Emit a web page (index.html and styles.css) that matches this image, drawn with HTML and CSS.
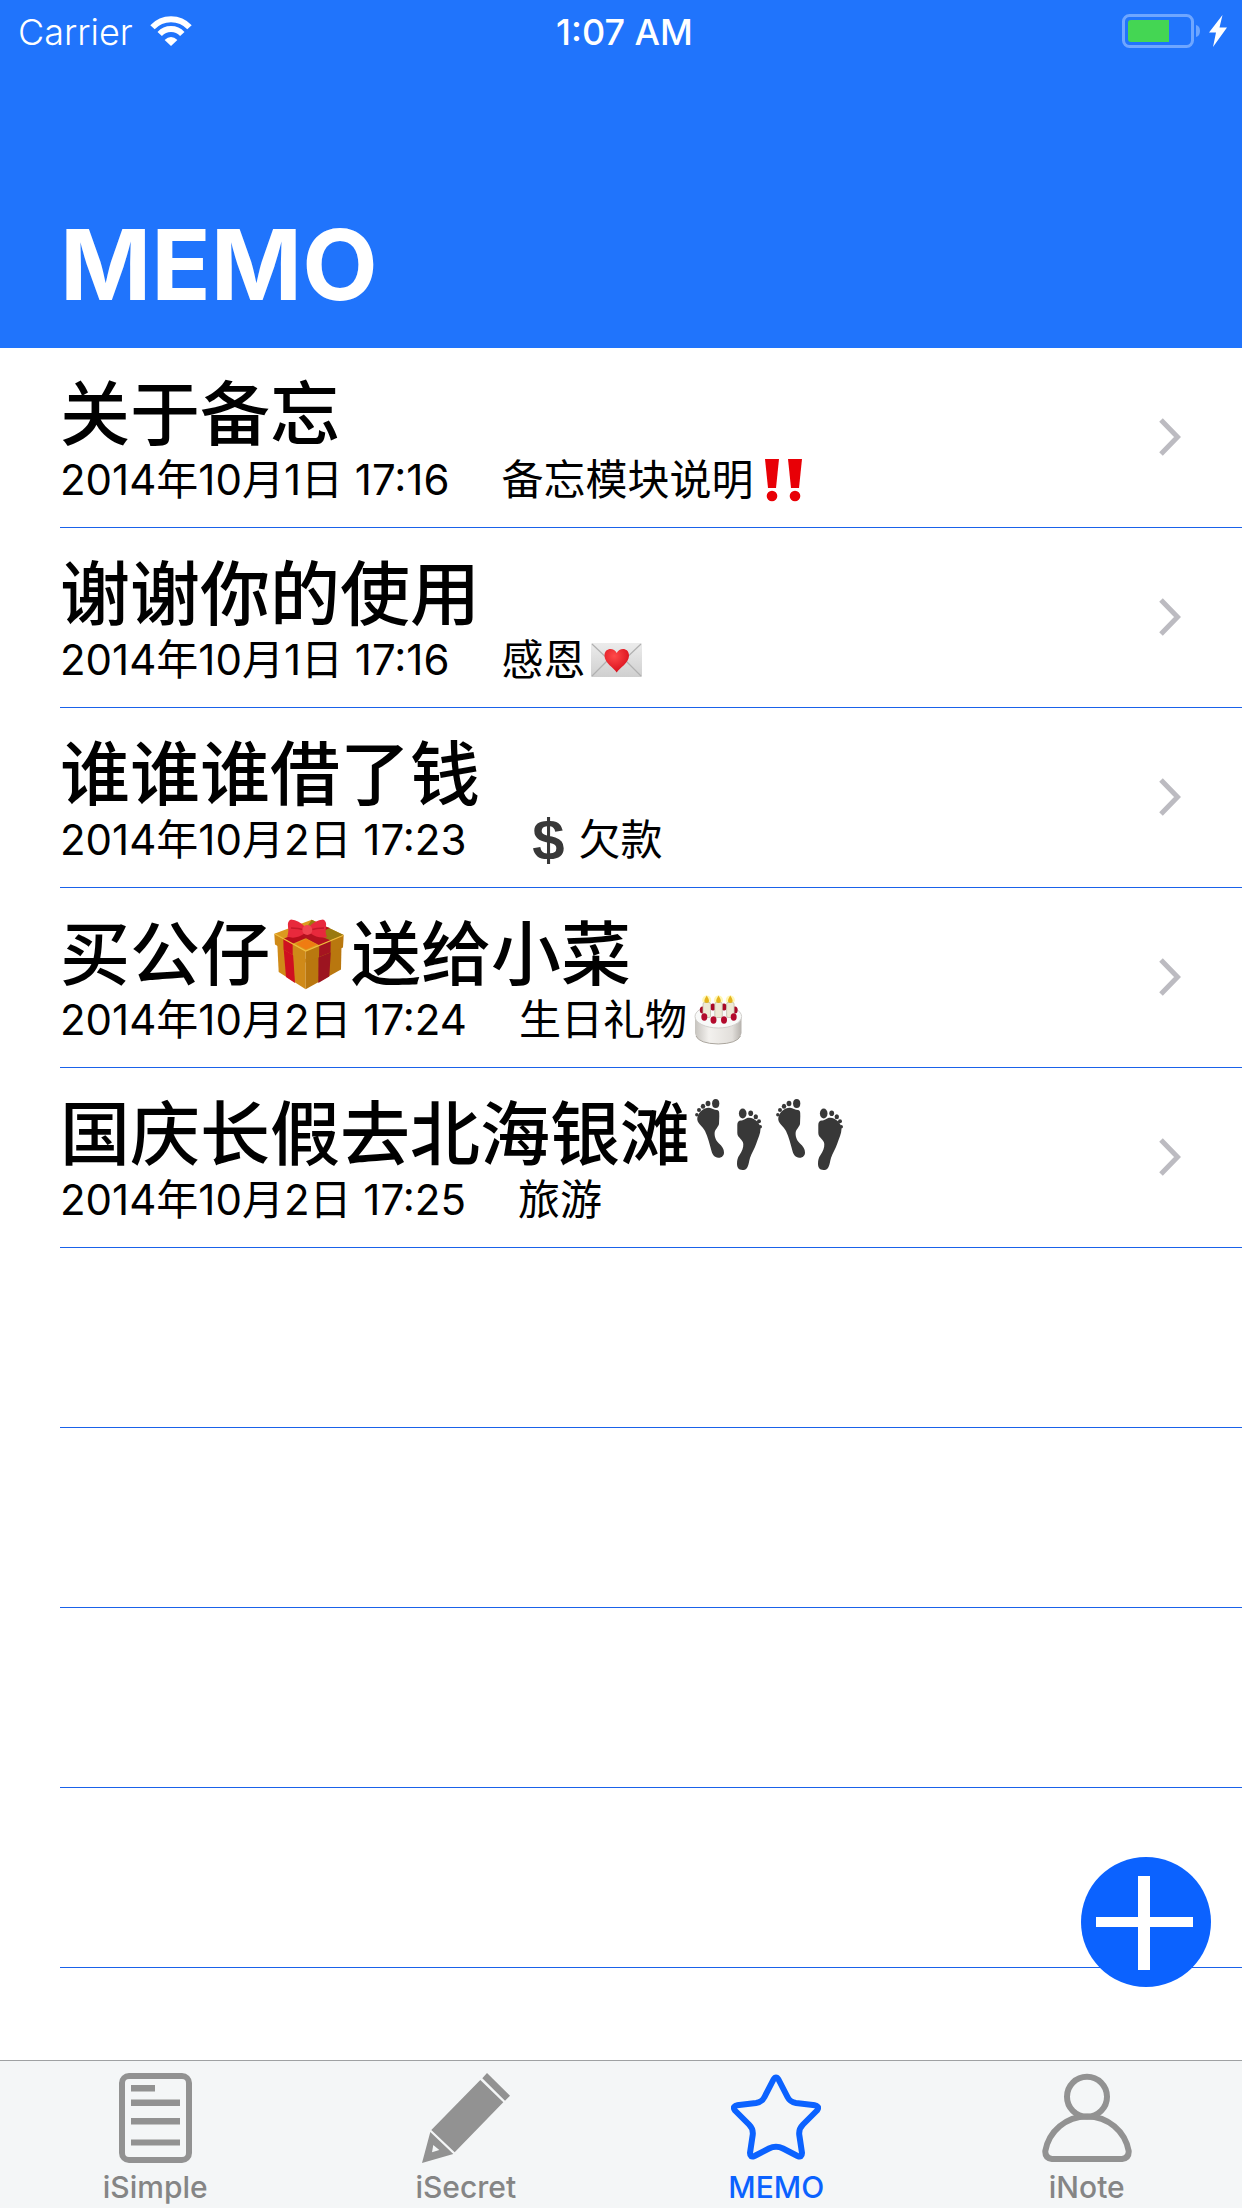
FILE: index.html
```html
<!DOCTYPE html>
<html lang="zh-CN">
<head>
<meta charset="utf-8">
<meta name="viewport" content="width=device-width, initial-scale=1">
<title>MEMO</title>
<link rel="stylesheet" href="styles.css">
</head>
<body>
<svg class="defs" aria-hidden="true">
  <symbol id="chevron" viewBox="0 0 24 40">
    <path d="M3 3 19.500 20 3 37" fill="none" stroke="#bcbbc1" stroke-width="5"/>
  </symbol>
  <symbol id="feet" viewBox="0 0 67 71">
    <g fill="#383838">
      <ellipse cx="20.700" cy="4.500" rx="3.600" ry="4.500"/>
      <ellipse cx="13" cy="4.500" rx="2.400" ry="2.700"/>
      <ellipse cx="8" cy="7.200" rx="2.200" ry="2.500"/>
      <circle cx="4" cy="11" r="2"/>
      <circle cx="1.800" cy="15.800" r="1.700"/>
      <path d="M2.300 19C3 13 9 8.500 14 8.700C17 8.800 19 11 22 11C24.500 11.500 24.300 14 24.300 17L24 25C23.500 28 20 30 19.600 34C19.500 39 21.500 42 24 44.500C27 47 29 50 29 53.500C29 57 26.500 59 23.300 58.700C19.500 58.500 17.500 55.500 16.700 52.700C14.500 45 13 38 10 32C7.500 27 1.500 24 2.300 19Z"/>
      <ellipse cx="47.700" cy="14.500" rx="3.800" ry="5"/>
      <ellipse cx="55.700" cy="14.300" rx="2.400" ry="2.800"/>
      <ellipse cx="60.800" cy="17.700" rx="2.200" ry="2.500"/>
      <circle cx="64" cy="22.300" r="2"/>
      <circle cx="65.300" cy="27.700" r="1.700"/>
      <path d="M42.300 26C42.300 23 43.500 21.500 46 21.500C49 21.500 50.500 18.700 54 18.700C60 19 65.500 24 65.500 30C65.500 35 63 39 61.500 44C59.500 50 56.500 54 55 59C54 62 54 65 52.500 68C51.500 70.500 49.500 71 47.500 71C43.500 71 42 68 42 65C42 61 42.500 59 44.500 56C47 52 48.500 49 48.300 45C48 40 42.300 39 42.300 34Z"/>
    </g>
  </symbol>
</svg>

<div class="app">
  <header class="top">
    <div class="status">
      <div class="status-left">
        <span class="carrier">Carrier</span>
        <svg class="wifi" viewBox="0 0 42 30" role="img" aria-label="Wi-Fi">
          <path d="M2.500 11.300A25.300 25.300 0 0 1 39.500 11.300" fill="none" stroke="#fff" stroke-width="6"/>
          <path d="M9.700 18A15.500 15.500 0 0 1 32.300 18" fill="none" stroke="#fff" stroke-width="6"/>
          <path d="M14.600 24Q21 18 27.400 24L21 30Z" fill="#fff"/>
        </svg>
      </div>
      <span class="clock">1:07 AM</span>
      <div class="status-right">
        <svg class="battery" viewBox="0 0 79 34" role="img" aria-label="Battery charging">
          <rect x="1.500" y="1.500" width="69" height="31" rx="6" fill="none" stroke="#6ea6ff" stroke-width="3"/>
          <path d="M74 11Q78 12 78 17T74 23Z" fill="#6ea6ff"/>
          <path d="M9 6H47V28H9Q6 28 6 25V9Q6 6 9 6Z" fill="#44d653"/>
        </svg>
        <svg class="bolt" viewBox="0 0 18 32" aria-hidden="true">
          <path d="M13.500 0 0 17.500H7L4 32 18 12.500H10.500Z" fill="#fff"/>
        </svg>
      </div>
    </div>
    <h1 class="heading">MEMO</h1>
  </header>

  <main class="content">
    <ul class="memos">
      <li class="memo">
        <a class="memo-link" href="#memo-1">
          <span class="memo-text">
            <span class="memo-title">关于备忘</span>
            <span class="memo-meta"><time>2014年10月1日 17:16</time><span class="tag">备忘模块说明<svg class="emoji" viewBox="0 0 60 50" role="img" aria-label="‼️"><g fill="#e80006"><path d="M12 4H26L23 33H15Z"/><circle cx="19" cy="41" r="5.300"/><path d="M35 4H49L46 33H38Z"/><circle cx="42" cy="41" r="5.300"/></g></svg></span></span>
          </span>
          <svg class="chevron" aria-hidden="true"><use href="#chevron"/></svg>
        </a>
      </li>
      <li class="memo">
        <a class="memo-link" href="#memo-2">
          <span class="memo-text">
            <span class="memo-title">谢谢你的使用</span>
            <span class="memo-meta"><time>2014年10月1日 17:16</time><span class="tag">感恩<svg class="emoji" viewBox="0 0 60 50" role="img" aria-label="💌">
              <defs>
                <linearGradient id="paper" x2="0" y2="1"><stop stop-color="#ececec"/><stop offset="1" stop-color="#cfcfcf"/></linearGradient>
                <radialGradient id="heart" cx=".4" cy=".3" r=".7"><stop stop-color="#ff4a4a"/><stop offset="1" stop-color="#d80f1c"/></radialGradient>
              </defs>
              <rect x="6" y="8" width="51" height="34" rx="1" fill="url(#paper)"/>
              <path d="M7 9 27 28Q31.500 32 36 28L56 9M7 41 23 25M56 41 40 25" fill="none" stroke="#b1b1b1" stroke-width="1.200"/>
              <path d="M31.700 37.500C29 33 19.500 28 19.500 20.500C19.500 12.500 29 12 31.700 18C34.500 12 44 12.500 44 20.500C44 28 34.500 33 31.700 37.500Z" fill="url(#heart)"/>
            </svg></span></span>
          </span>
          <svg class="chevron" aria-hidden="true"><use href="#chevron"/></svg>
        </a>
      </li>
      <li class="memo">
        <a class="memo-link" href="#memo-3">
          <span class="memo-text">
            <span class="memo-title">谁谁谁借了钱</span>
            <span class="memo-meta"><time>2014年10月2日 17:23</time><span class="tag"><span class="dollar">$</span>欠款</span></span>
          </span>
          <svg class="chevron" aria-hidden="true"><use href="#chevron"/></svg>
        </a>
      </li>
      <li class="memo">
        <a class="memo-link" href="#memo-4">
          <span class="memo-text">
            <span class="memo-title">买公仔<svg class="emoji-large" viewBox="0 0 81 72" role="img" aria-label="🎁">
              <g transform="translate(4 0)">
                <path d="M3.300 25 31.700 40V70.300L4.700 53Z" fill="#d08a18"/>
                <path d="M67.500 26 31.700 40V70.300L67 50.500Z" fill="#b9770f"/>
                <path d="M9.500 28 19 34 21 64 12 58Z" fill="#cf1020"/>
                <path d="M44.500 35 57 30 55.300 57.500 44.300 64Z" fill="#9c1420"/>
                <path d="M.3 14.700 37.700.7 69.700 16 31.700 32Z" fill="#dc9a20"/>
                <path d="M37.700.7 69.700 16 50 24 30 12Z" fill="#9a7a10"/>
                <path d="M.3 14.700 31.700 32V43.500L1 25.500Z" fill="#cf8a18"/>
                <path d="M69.700 16 31.700 32V43.500L69 28.500Z" fill="#b9780f"/>
                <path d="M9.300 19.700 45 6 56 9 18.700 24.800Z" fill="#b80e1b"/>
                <path d="M9.300 19.700 18.700 24.800V36L9.500 30.500Z" fill="#cf1020"/>
                <path d="M45.300 26.300 20 13 28 9 56.700 21.500Z" fill="#b51220"/>
                <path d="M45.300 26.300 56.700 21.500 56.500 33.500 45 38Z" fill="#a51420"/>
                <path d="M22 25 32 20 43 25.500 32 30.500Z" fill="#ef7c12"/>
                <path d="M1 15 31.700 32 69 16.500" fill="none" stroke="#f0bc3c" stroke-width="1.200"/>
                <path d="M31 8Q25 1 17 .5Q13 2 14 8Q15 14 13 17.500Q22 21 31 14Z" fill="#e8293c"/>
                <path d="M35 8Q41 1 49 .5Q53 2 52 8Q51 14 53 18Q44 20 36 14Z" fill="#e8293c"/>
                <path d="M17 9Q24 9 31 11M50 9Q43 9 36 11" fill="none" stroke="#c51829" stroke-width="1.500"/>
                <circle cx="33.300" cy="11" r="5" fill="#f04450"/>
              </g>
            </svg>送给小菜</span>
            <span class="memo-meta"><time>2014年10月2日 17:24</time><span class="tag">生日礼物<svg class="emoji" viewBox="0 0 60 50" role="img" aria-label="🎂">
              <defs><linearGradient id="icing"><stop stop-color="#c6c3be"/><stop offset=".3" stop-color="#f3f1ee"/><stop offset=".8" stop-color="#e2dfdb"/><stop offset="1" stop-color="#b5b1ac"/></linearGradient></defs>
              <g transform="translate(7 1)">
                <path d="M1 21V37Q2 47 24.300 48Q46 47 47.500 37V21Z" fill="url(#icing)"/>
                <path d="M2 40Q5 47.500 24.300 48Q43 47.500 46.500 40" fill="none" stroke="#aaa59d"/>
                <ellipse cx="24.300" cy="20.500" rx="23.300" ry="11.500" fill="#f8f9f8" stroke="#d1cfcc"/>
                <g fill="#a90827"><ellipse cx="8.500" cy="14" rx="2.700" ry="3.500"/><ellipse cx="19" cy="11" rx="2.700" ry="3.500"/><ellipse cx="30" cy="11" rx="2.700" ry="3.500"/><ellipse cx="41" cy="14" rx="2.700" ry="3.500"/></g>
                <g fill="#fff7b5"><circle cx="12.700" cy="4" r="4.500"/><circle cx="24.500" cy="4" r="4.500"/><circle cx="36.300" cy="4" r="4.500"/></g>
                <g fill="#eee9d5" stroke="#bdb7a5" stroke-width=".7"><rect x="9" y="6.500" width="7.500" height="15" rx="1.500"/><rect x="20.800" y="6.500" width="7.500" height="15" rx="1.500"/><rect x="32.600" y="6.500" width="7.500" height="15" rx="1.500"/></g>
                <g fill="#e5b41d"><path d="M12.700-.5Q17.500 7 12.700 7T12.700-.5Z"/><path d="M24.500-.5Q29.300 7 24.500 7T24.500-.5Z"/><path d="M36.300-.5Q41.100 7 36.300 7T36.300-.5Z"/></g>
                <g fill="#b30a2c"><ellipse cx="10.300" cy="21" rx="3" ry="3.700"/><ellipse cx="19.500" cy="24" rx="3" ry="3.700"/><ellipse cx="30" cy="24" rx="3" ry="3.700"/><ellipse cx="39.700" cy="21" rx="3" ry="3.700"/></g>
              </g>
            </svg></span></span>
          </span>
          <svg class="chevron" aria-hidden="true"><use href="#chevron"/></svg>
        </a>
      </li>
      <li class="memo">
        <a class="memo-link" href="#memo-5">
          <span class="memo-text">
            <span class="memo-title">国庆长假去北海银滩<svg class="emoji-large" viewBox="0 0 81 72" role="img" aria-label="👣"><use href="#feet" x="5" y="0" width="67" height="71"/></svg><svg class="emoji-large" viewBox="0 0 81 72" role="img" aria-label="👣"><use href="#feet" x="5" y="0" width="67" height="71"/></svg></span>
            <span class="memo-meta"><time>2014年10月2日 17:25</time><span class="tag">旅游</span></span>
          </span>
          <svg class="chevron" aria-hidden="true"><use href="#chevron"/></svg>
        </a>
      </li>
      <li class="memo" aria-hidden="true"></li>
      <li class="memo" aria-hidden="true"></li>
      <li class="memo" aria-hidden="true"></li>
      <li class="memo" aria-hidden="true"></li>
    </ul>
  </main>

  <button class="add" type="button" aria-label="新建备忘">
    <svg viewBox="0 0 130 130" aria-hidden="true"><path d="M15 60H112V70H15ZM57 19H69V113H57Z" fill="#fff"/></svg>
  </button>

  <nav class="tabs">
    <a class="tab" href="#isimple">
      <svg class="tab-icon" viewBox="0 0 90 90" aria-hidden="true">
        <rect x="12" y="3" width="67" height="84" rx="7" fill="none" stroke="currentColor" stroke-width="6"/>
        <path d="M21 12H45V18.500H21ZM21 26.500H70V33H21ZM21 45H70V51.500H21ZM21 66.500H70V72.500H21Z" fill="currentColor"/>
      </svg>
      <span class="tab-label">iSimple</span>
    </a>
    <a class="tab" href="#isecret">
      <svg class="tab-icon" viewBox="0 0 90 90" aria-hidden="true">
        <path d="M66 0 89 22.700 84 27.700 61.300 5.300ZM59.300 7 82.300 29.300 33.700 79.300 10.300 57ZM9.300 59 32.300 81 1 90ZM12.300 72 11 79.300 18.300 77Z" fill="currentColor" fill-rule="evenodd"/>
      </svg>
      <span class="tab-label">iSecret</span>
    </a>
    <a class="tab tab-active" href="#memo" aria-current="page">
      <svg class="tab-icon" viewBox="0 0 90 90" aria-hidden="true">
        <path d="M42.500 6.500Q45 2.500 47.500 6.500L56.500 24Q59 29 65 30L84 32.300Q89 33.500 86 37.500L72 51.500Q67.500 56 68.300 62L71 80Q71 85 66.500 83L52 75.500Q45 72 38 75.500L23.500 83Q19 85 19 80L21.700 62Q22.500 56 18 51.500L4 37.500Q1 33.500 6 32.300L25 30Q31 29 33.500 24Z" fill="none" stroke="currentColor" stroke-width="6" stroke-linejoin="round"/>
      </svg>
      <span class="tab-label">MEMO</span>
    </a>
    <a class="tab" href="#inote">
      <svg class="tab-icon" viewBox="0 0 90 90" aria-hidden="true">
        <circle cx="45" cy="23.700" r="20" fill="none" stroke="currentColor" stroke-width="6"/>
        <path d="M10 86Q3 85 3.300 78C7 58 24 43.500 45 43.500C66 43.500 83 58 86.700 78Q87 85 80 86Z" fill="none" stroke="currentColor" stroke-width="6"/>
      </svg>
      <span class="tab-label">iNote</span>
    </a>
  </nav>
</div>
</body>
</html>
```
FILE: styles.css
```css
* {
  box-sizing: border-box;
}

body {
  margin: 0;
  background: #fff;
  color: #000;
  font-family: Inter, "Noto Sans CJK SC", sans-serif;
}

a {
  color: inherit;
  text-decoration: none;
}

svg {
  display: block;
}

.defs {
  position: absolute;
  width: 0;
  height: 0;
}

.app {
  display: flex;
  flex-direction: column;
  min-height: 100vh;
}

/* Header */
.top {
  background: #2074fc;
  color: #fff;
}

.status {
  display: grid;
  grid-template-columns: 1fr auto 1fr;
  align-items: center;
  height: 60px;
  padding: 0 15px 0 18px;
  font-size: 36px;
  line-height: 60px;
}

.status-left,
.status-right {
  display: flex;
  align-items: center;
}

.status-left {
  gap: 17px;
}

.status-right {
  justify-content: flex-end;
  gap: 8px;
}

.carrier {
  padding-top: 2px;
  font-weight: 300;
}

.clock {
  padding: 2px 0 0 4px;
  font-weight: 500;
}

.wifi {
  width: 42px;
  height: 30px;
}

.battery {
  width: 79px;
  height: 34px;
}

.bolt {
  width: 18px;
  height: 32px;
}

.heading {
  margin: 0;
  padding: 145px 60px 23px;
  font-size: 98px;
  font-weight: 700;
  line-height: 120px;
}

/* Memo list */
.content {
  flex: 1;
}

.memos {
  margin: 0;
  padding: 0 0 0 60px;
  list-style: none;
}

.memo {
  min-height: 180px;
  border-bottom: 1px solid #1a62ea;
}

.memo-link {
  display: flex;
  align-items: center;
  justify-content: space-between;
  height: 178px;
  padding-right: 60px;
}

.memo-text {
  display: flex;
  flex-direction: column;
  padding-top: 10px;
  white-space: nowrap;
}

.memo-title {
  display: flex;
  align-items: center;
  font-size: 70px;
  font-weight: 500;
  line-height: 76px;
}

.memo-meta {
  display: flex;
  gap: 52px;
  font-size: 42px;
  line-height: 54px;
}

.tag {
  display: flex;
  align-items: center;
}

.emoji {
  width: 60px;
  height: 50px;
}

.emoji-large {
  width: 81px;
  height: 72px;
}

.dollar {
  width: 60px;
  color: #383838;
  font-family: "Liberation Sans", sans-serif;
  font-size: 58px;
  font-weight: 700;
  text-align: center;
}

.chevron {
  width: 24px;
  height: 40px;
}

/* Floating add button */
.add {
  position: fixed;
  right: 31px;
  bottom: 221px;
  width: 130px;
  height: 130px;
  padding: 0;
  border: 0;
  border-radius: 50%;
  background: #0b62ff;
}

/* Tab bar */
.tabs {
  display: grid;
  grid-template-columns: repeat(4, 1fr);
  height: 148px;
  border-top: 1px solid #9fa1a3;
  background: #f4f6f7;
}

.tab {
  display: flex;
  flex-direction: column;
  align-items: center;
  gap: 6px;
  padding-top: 12px;
  color: #929292;
}

.tab-icon {
  width: 90px;
  height: 90px;
}

.tab-label {
  color: #858585;
  font-size: 30px;
  font-weight: 500;
  line-height: 36px;
}

.tab-active,
.tab-active .tab-label {
  color: #0b62ff;
}
```
